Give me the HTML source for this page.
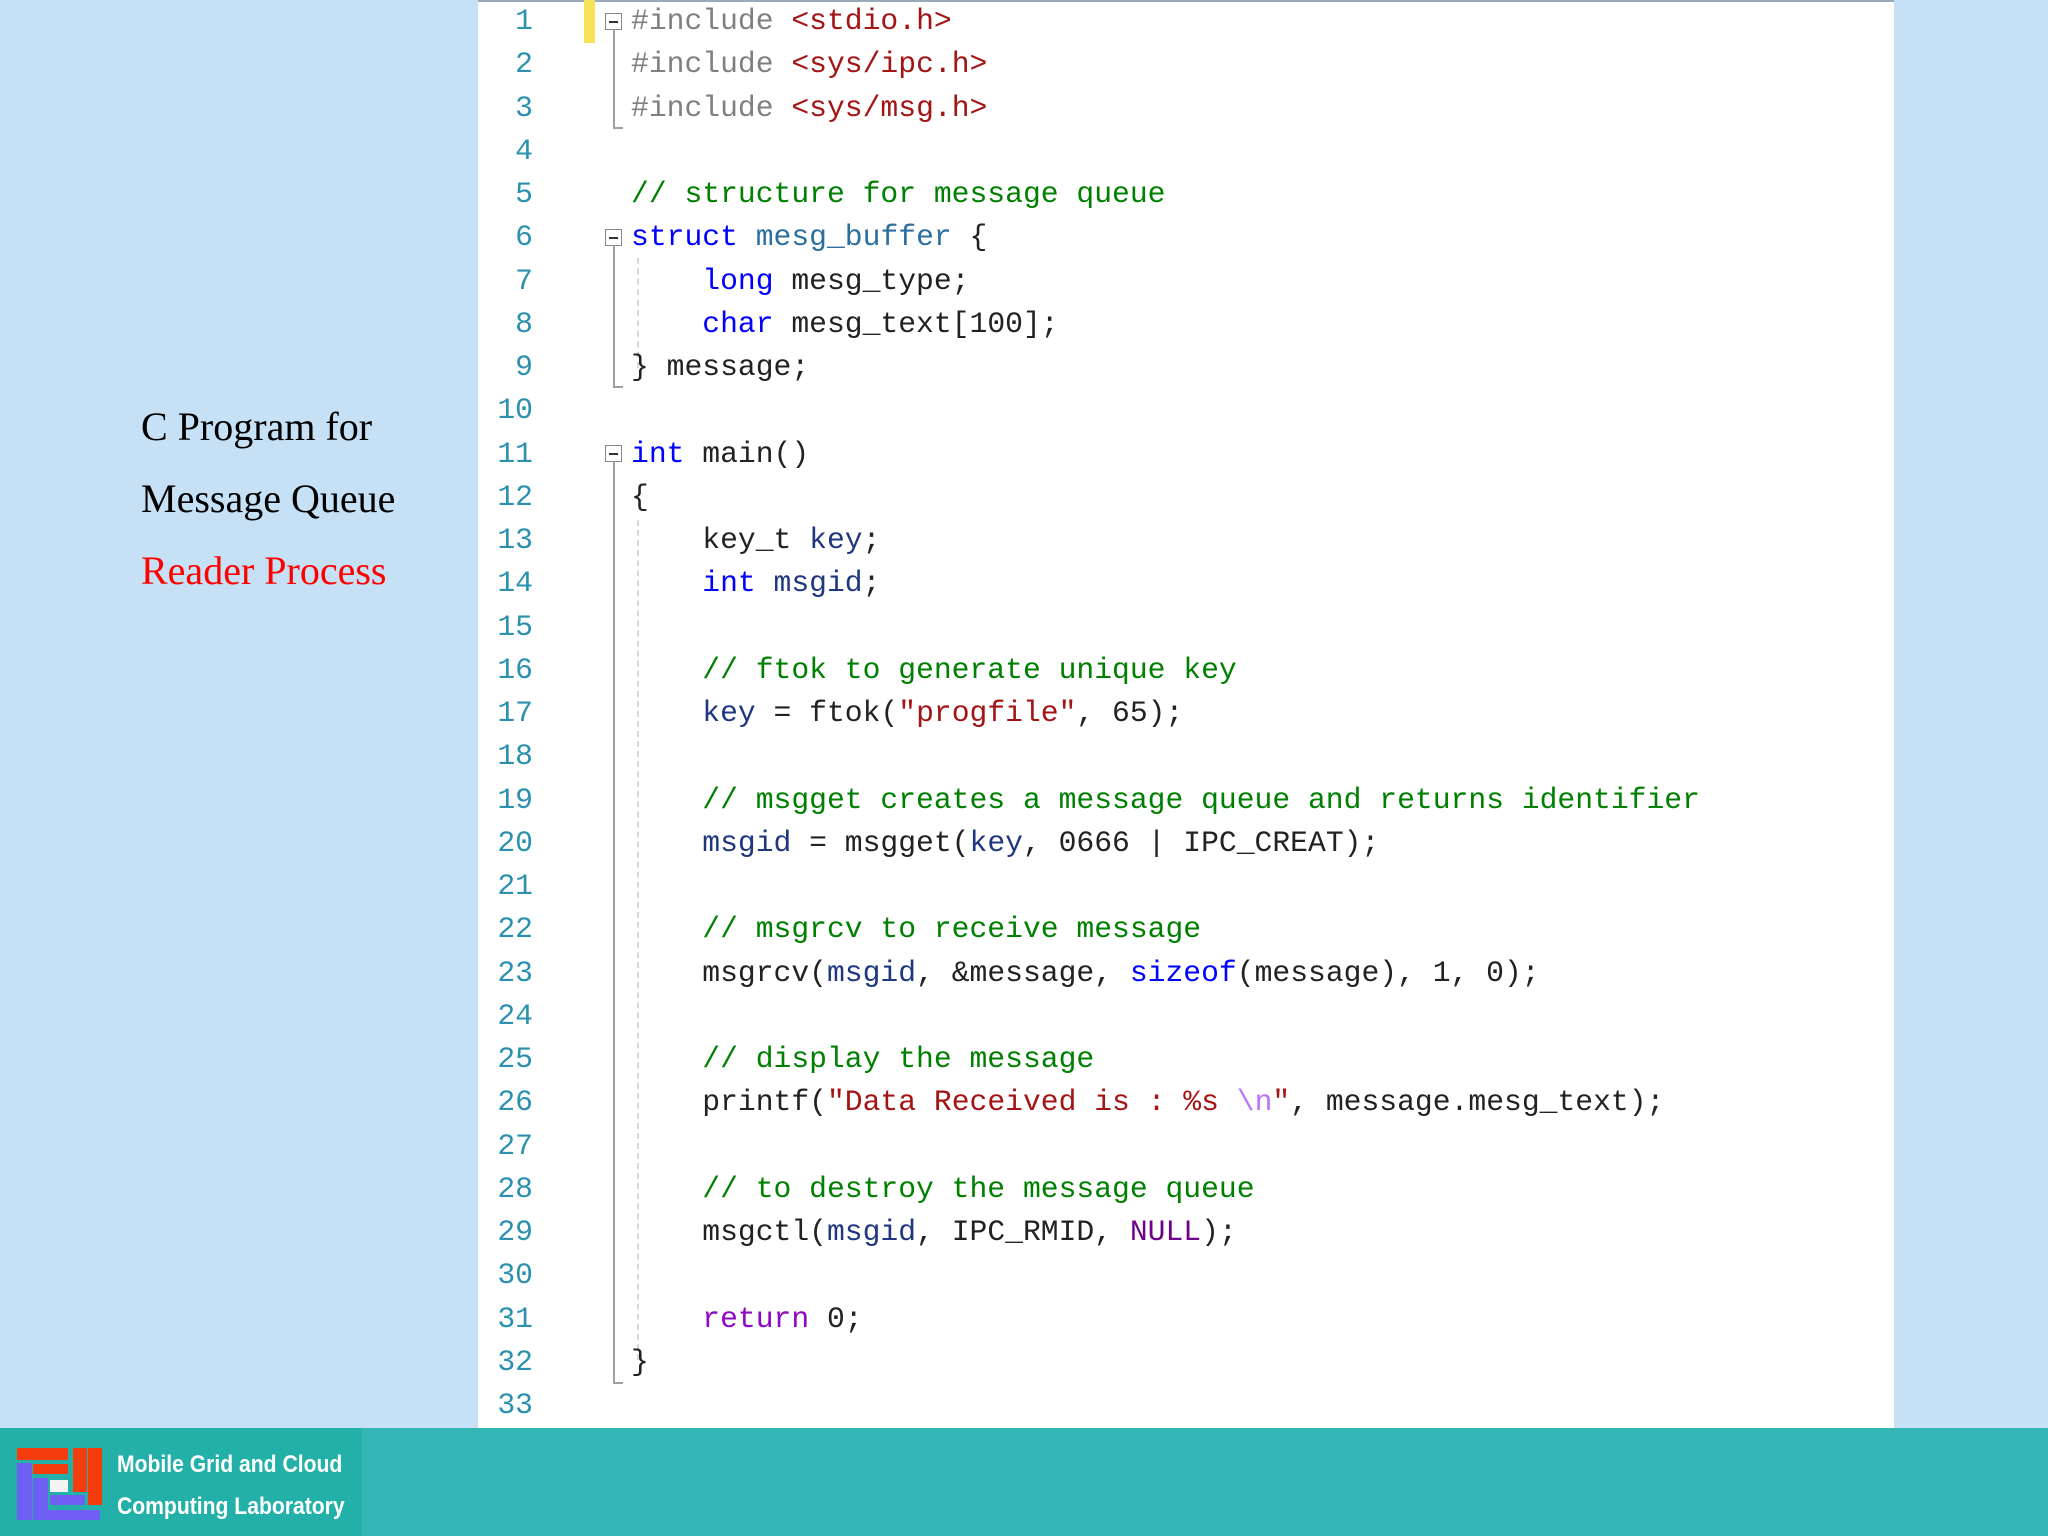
<!DOCTYPE html>
<html><head><meta charset="utf-8"><style>
body{margin:0;width:2048px;height:1536px;background:#c6e1f6;position:relative;overflow:hidden;font-family:"Liberation Sans",sans-serif}
#panel{position:absolute;left:478px;top:0;width:1416px;height:1428px;background:#fff;border-top:2px solid #9ab}
.ln{position:absolute;left:478px;width:55px;text-align:right;top:0px;font:29.7px/43.25px "Liberation Mono",monospace;color:#2b91af;white-space:pre}
.code{position:absolute;left:631px;top:0px;font:29.7px/43.25px "Liberation Mono",monospace;color:#222;white-space:pre}
.k{color:#0000ff}.c{color:#008000}.s{color:#a31515}.p{color:#808080}.t{color:#2b6f9f}.v{color:#1f377f}.r{color:#8f08c4}.m{color:#6f008a}.e{color:#b776fb}
.side{position:absolute;left:141px;font:40px "Liberation Serif",serif;color:#000}
#band{position:absolute;left:0;top:1428px;width:2048px;height:108px;background:#35b6b6}
#logo{position:absolute;left:0;top:1428px;width:362px;height:108px;background:#22b0a8}
.fold{position:absolute;width:17px;height:17px;border:1.5px solid #888;background:#fff;box-sizing:border-box}
.fold:after{content:"";position:absolute;left:3px;right:3px;top:6.5px;height:2px;background:#333}
.vl{position:absolute;width:2px;background:#a0a0a0}
.dl{position:absolute;width:0;border-left:2px dashed #d8d8d8}
</style></head><body>
<div id="panel"></div>
<div style="position:absolute;left:584px;top:0;width:11px;height:43px;background:#f5e35a"></div>
<div class="fold" style="left:605px;top:13px"></div>
<div class="vl" style="left:613px;top:30px;height:98px"></div><div style="position:absolute;left:613px;top:127px;width:10px;height:2px;background:#a0a0a0"></div>
<div class="fold" style="left:605px;top:229px"></div>
<div class="vl" style="left:613px;top:246px;height:141px"></div><div style="position:absolute;left:613px;top:386px;width:10px;height:2px;background:#a0a0a0"></div>
<div class="dl" style="left:637px;top:258px;height:110px"></div>
<div class="fold" style="left:605px;top:445px"></div>
<div class="vl" style="left:613px;top:462px;height:921px"></div><div style="position:absolute;left:613px;top:1382px;width:10px;height:2px;background:#a0a0a0"></div>
<div class="dl" style="left:637px;top:520px;height:840px"></div>
<div class="ln">1
2
3
4
5
6
7
8
9
10
11
12
13
14
15
16
17
18
19
20
21
22
23
24
25
26
27
28
29
30
31
32
33</div>
<div class="code"><span class="p">#include</span> <span class="s">&lt;stdio.h&gt;</span>
<span class="p">#include</span> <span class="s">&lt;sys/ipc.h&gt;</span>
<span class="p">#include</span> <span class="s">&lt;sys/msg.h&gt;</span>

<span class="c">// structure for message queue</span>
<span class="k">struct</span> <span class="t">mesg_buffer</span> {
    <span class="k">long</span> mesg_type;
    <span class="k">char</span> mesg_text[100];
} message;

<span class="k">int</span> main()
{
    key_t <span class="v">key</span>;
    <span class="k">int</span> <span class="v">msgid</span>;

    <span class="c">// ftok to generate unique key</span>
    <span class="v">key</span> = ftok(<span class="s">"progfile"</span>, 65);

    <span class="c">// msgget creates a message queue and returns identifier</span>
    <span class="v">msgid</span> = msgget(<span class="v">key</span>, 0666 | IPC_CREAT);

    <span class="c">// msgrcv to receive message</span>
    msgrcv(<span class="v">msgid</span>, &amp;message, <span class="k">sizeof</span>(message), 1, 0);

    <span class="c">// display the message</span>
    printf(<span class="s">"Data Received is : %s </span><span class="e">\n</span><span class="s">"</span>, message.mesg_text);

    <span class="c">// to destroy the message queue</span>
    msgctl(<span class="v">msgid</span>, IPC_RMID, <span class="m">NULL</span>);

    <span class="r">return</span> 0;
}
</div>
<div class="side" style="top:403px">C Program for</div>
<div class="side" style="top:475px">Message Queue</div>
<div class="side" style="top:547px;color:#ff0000">Reader Process</div>
<div id="band"></div>
<div id="logo">
<svg width="85" height="75" style="position:absolute;left:17px;top:19px" viewBox="0 0 85 75">
<rect x="0" y="16" width="15" height="57" fill="#6f5ff2"/>
<rect x="16" y="31" width="15" height="42" fill="#6f5ff2"/>
<rect x="16" y="63" width="67" height="10" fill="#6f5ff2"/>
<rect x="33" y="48" width="35" height="10" fill="#6f5ff2"/>
<rect x="0" y="1" width="51" height="12" fill="#f43c0c"/>
<rect x="16" y="17" width="35" height="10" fill="#f43c0c"/>
<rect x="56" y="1" width="14" height="44" fill="#f43c0c"/>
<rect x="71" y="1" width="14" height="57" fill="#f43c0c"/>
<rect x="33" y="33" width="18" height="12" fill="#f4f4f4"/>
</svg>
<div style="position:absolute;left:117px;top:16px;color:#fff;font:bold 24px/42px 'Liberation Sans',sans-serif;white-space:nowrap;transform:scaleX(0.88);transform-origin:0 0">Mobile Grid and Cloud<br>Computing Laboratory</div>
</div>
</body></html>
